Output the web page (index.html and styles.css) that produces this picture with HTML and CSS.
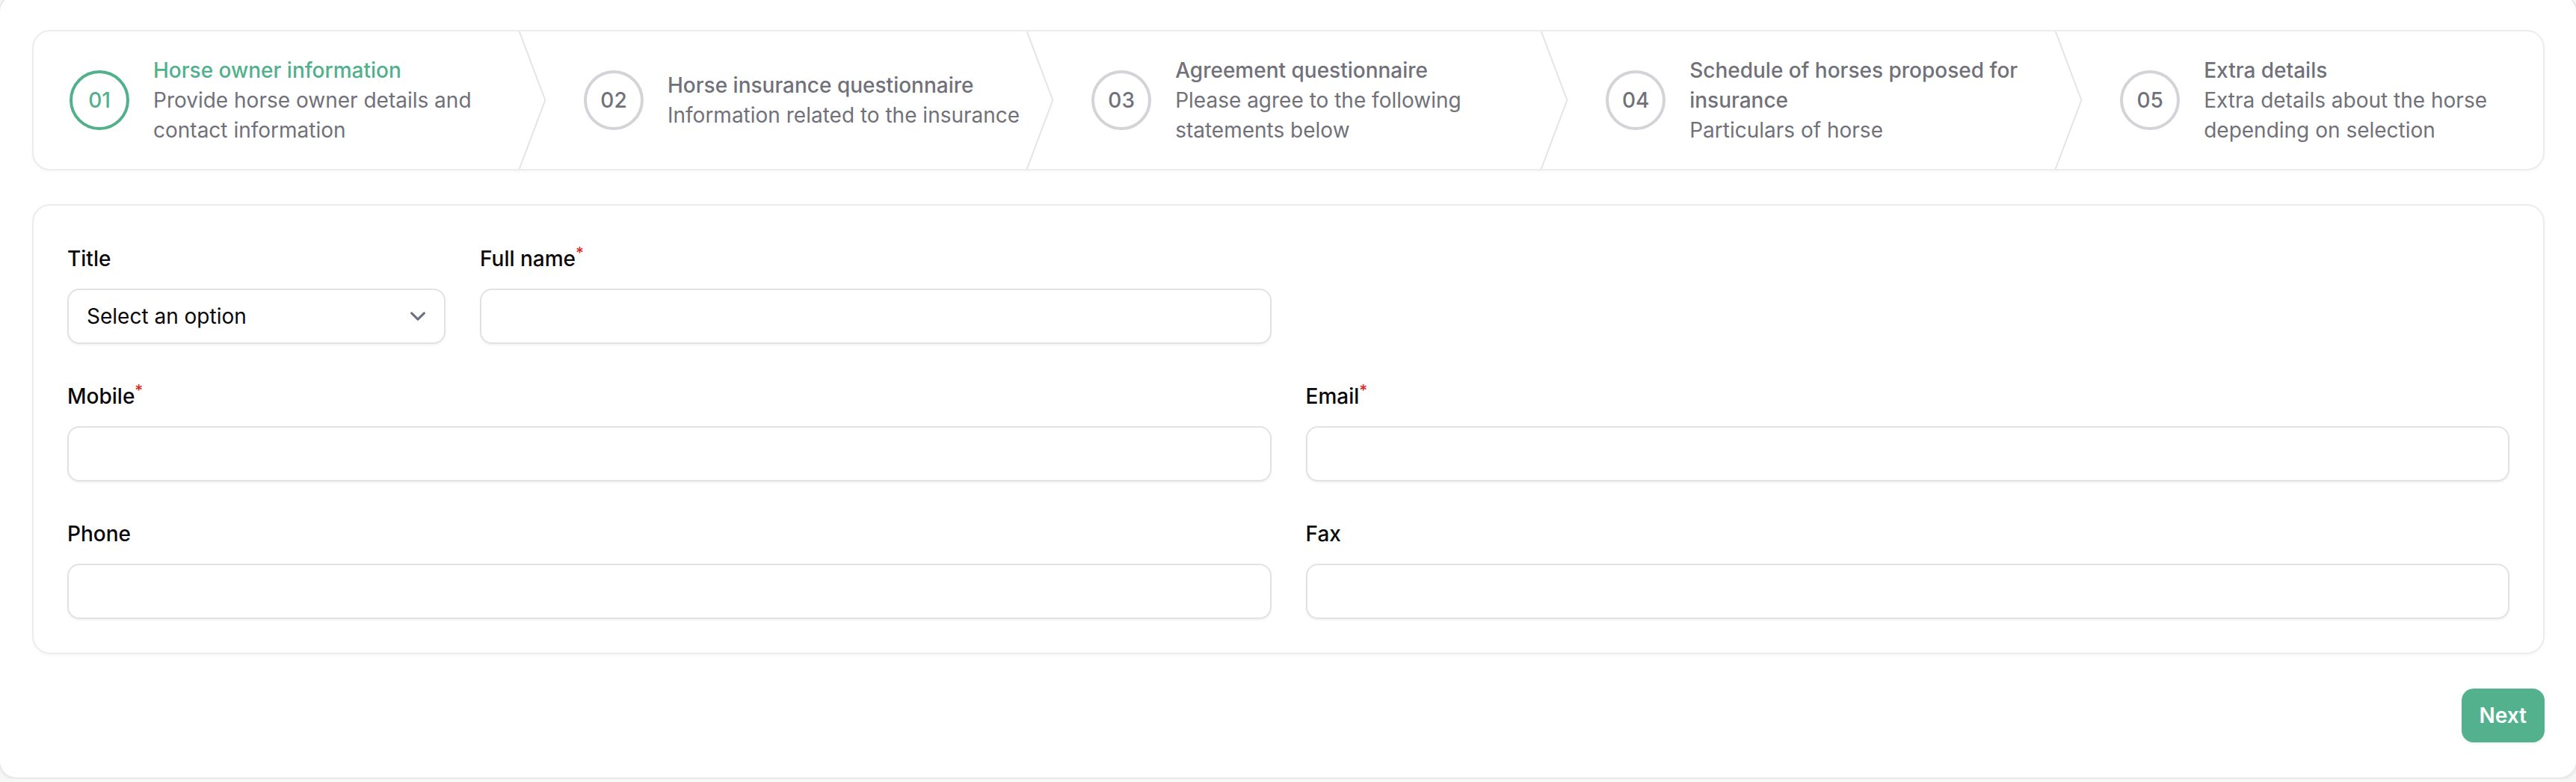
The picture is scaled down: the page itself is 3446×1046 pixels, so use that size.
FILE: index.html
```html
<!DOCTYPE html>
<html lang="en">
<head>
<meta charset="utf-8">
<title>Horse insurance wizard</title>
<link rel="stylesheet" href="styles.css">
</head>
<body>
<div class="wizard">
  <ol class="steps">
    <li class="step step-active">
      <div class="step-circle">01</div>
      <div class="step-text">
        <span class="step-title">Horse owner information</span>
        <span class="step-desc">Provide horse owner details and contact information</span>
      </div>
      <div class="step-sep"><svg viewBox="0 0 22 80" preserveAspectRatio="none"><path d="M0 -2L20 40L0 82"/></svg></div>
    </li>
    <li class="step">
      <div class="step-circle">02</div>
      <div class="step-text">
        <span class="step-title">Horse insurance questionnaire</span>
        <span class="step-desc">Information related to the insurance</span>
      </div>
      <div class="step-sep"><svg viewBox="0 0 22 80" preserveAspectRatio="none"><path d="M0 -2L20 40L0 82"/></svg></div>
    </li>
    <li class="step">
      <div class="step-circle">03</div>
      <div class="step-text">
        <span class="step-title">Agreement questionnaire</span>
        <span class="step-desc">Please agree to the following statements below</span>
      </div>
      <div class="step-sep"><svg viewBox="0 0 22 80" preserveAspectRatio="none"><path d="M0 -2L20 40L0 82"/></svg></div>
    </li>
    <li class="step">
      <div class="step-circle">04</div>
      <div class="step-text">
        <span class="step-title">Schedule of horses proposed for insurance</span>
        <span class="step-desc">Particulars of horse</span>
      </div>
      <div class="step-sep"><svg viewBox="0 0 22 80" preserveAspectRatio="none"><path d="M0 -2L20 40L0 82"/></svg></div>
    </li>
    <li class="step">
      <div class="step-circle">05</div>
      <div class="step-text">
        <span class="step-title">Extra details</span>
        <span class="step-desc">Extra details about the horse depending on selection</span>
      </div>
    </li>
  </ol>

  <section class="form-card">
    <div class="form-grid">
      <div class="row-first">
        <div class="field">
          <label class="field-label">Title</label>
          <div class="select">
            <span class="select-text">Select an option</span>
            <svg class="select-chevron" viewBox="0 0 20 20" fill="none"><path d="m6 8 4 4 4-4"/></svg>
          </div>
        </div>
        <div class="field">
          <label class="field-label">Full name<sup class="req">*</sup></label>
          <input class="input" type="text">
        </div>
      </div>
      <div class="spacer"></div>
      <div class="field">
        <label class="field-label">Mobile<sup class="req">*</sup></label>
        <input class="input" type="text">
      </div>
      <div class="field">
        <label class="field-label">Email<sup class="req">*</sup></label>
        <input class="input" type="text">
      </div>
      <div class="field">
        <label class="field-label">Phone</label>
        <input class="input" type="text">
      </div>
      <div class="field">
        <label class="field-label">Fax</label>
        <input class="input" type="text">
      </div>
    </div>
  </section>

  <div class="actions">
    <button class="btn-next" type="button">Next</button>
  </div>
</div>
</body>
</html>
```

FILE: styles.css
```css
* {
  box-sizing: border-box;
}

html, body {
  margin: 0;
  padding: 0;
  overflow: hidden;
  background: #f7f7f8;
}

body {
  font-family: Inter, "Noto Sans", sans-serif;
  color: #09090b;
}

.wizard {
  margin: -8px -2px 0 -2px;
  background: #ffffff;
  border: 2px solid #e8e8ea;
  border-radius: 24px;
  box-shadow: 0 2px 4px rgba(0, 0, 0, 0.05);
  padding: 46px 42px 47px 43px;
  display: flex;
  flex-direction: column;
  gap: 45px;
}

/* ---------- steps ---------- */
.steps {
  list-style: none;
  margin: 0;
  padding: 0;
  display: grid;
  grid-template-columns: auto auto auto auto 1fr;
  background: #ffffff;
  border: 2px solid #ececee;
  border-radius: 24px;
  box-shadow: 0 2px 4px rgba(0, 0, 0, 0.03);
  overflow: hidden;
}

.step {
  position: relative;
  display: flex;
  align-items: center;
  gap: 32px;
  padding: 32px 48px;
}

.step-circle {
  flex: none;
  width: 80px;
  height: 80px;
  border-radius: 50%;
  border: 4px solid #d4d4d8;
  display: flex;
  align-items: center;
  justify-content: center;
  font-size: 28px;
  font-weight: 500;
  color: #71717a;
}

.step-text {
  display: flex;
  flex-direction: column;
  max-width: 480px;
  font-size: 28px;
  line-height: 40px;
}

.step-title {
  font-weight: 500;
  color: #71717a;
}

.step-desc {
  font-weight: 400;
  color: #71717a;
}

.step-active .step-circle {
  border-color: #52b08c;
  color: #52b08c;
}

.step-active .step-title {
  color: #52b08c;
}

.step-sep {
  position: absolute;
  top: 0;
  right: 0;
  width: 40px;
  height: 100%;
}

.step-sep svg {
  display: block;
  width: 100%;
  height: 100%;
  overflow: visible;
}

.step-sep path {
  fill: none;
  stroke: #e4e4e7;
  stroke-width: 2px;
  stroke-linejoin: round;
  vector-effect: non-scaling-stroke;
}

/* ---------- form ---------- */
.form-card {
  background: #ffffff;
  border: 2px solid #ececee;
  border-radius: 24px;
  box-shadow: 0 2px 4px rgba(0, 0, 0, 0.03);
  padding: 47px 45px 45px 45px;
}

.form-grid {
  display: grid;
  grid-template-columns: 1fr 1fr;
  column-gap: 46px;
  row-gap: 46px;
}

.row-first {
  display: grid;
  grid-template-columns: 506px 1fr;
  column-gap: 46px;
}

.field {
  display: flex;
  flex-direction: column;
  gap: 16px;
}

.field-label {
  font-size: 28px;
  line-height: 48px;
  font-weight: 500;
  color: #09090b;
}

.req {
  color: #dc2626;
  font-weight: 500;
  font-size: 75%;
  line-height: 0;
  position: relative;
  vertical-align: baseline;
  top: -0.5em;
}

.input,
.select {
  display: block;
  width: 100%;
  height: 74px;
  margin: 0;
  border: 2px solid #e2e2e4;
  border-radius: 16px;
  background: #ffffff;
  box-shadow: 0 2px 3px rgba(0, 0, 0, 0.05);
  font-family: inherit;
  font-size: 28px;
  color: #09090b;
  outline: none;
}

.input {
  padding: 0 24px;
}

.select {
  display: flex;
  align-items: center;
  justify-content: space-between;
  padding: 0 14px 0 24px;
}

.select-text {
  font-size: 28px;
  line-height: 48px;
  color: #09090b;
}

.select-chevron {
  width: 42px;
  height: 42px;
  flex: none;
}

.select-chevron path {
  stroke: #6b7280;
  stroke-width: 1.5;
  stroke-linecap: round;
  stroke-linejoin: round;
}

/* ---------- actions ---------- */
.actions {
  display: flex;
  justify-content: flex-end;
  margin-top: 1px;
}

.btn-next {
  height: 72px;
  padding: 0 24px;
  border: none;
  border-radius: 16px;
  background: #54b18e;
  color: #ffffff;
  font-family: inherit;
  font-size: 28px;
  font-weight: 600;
  box-shadow: 0 2px 3px rgba(0, 0, 0, 0.06);
  cursor: pointer;
}
```
